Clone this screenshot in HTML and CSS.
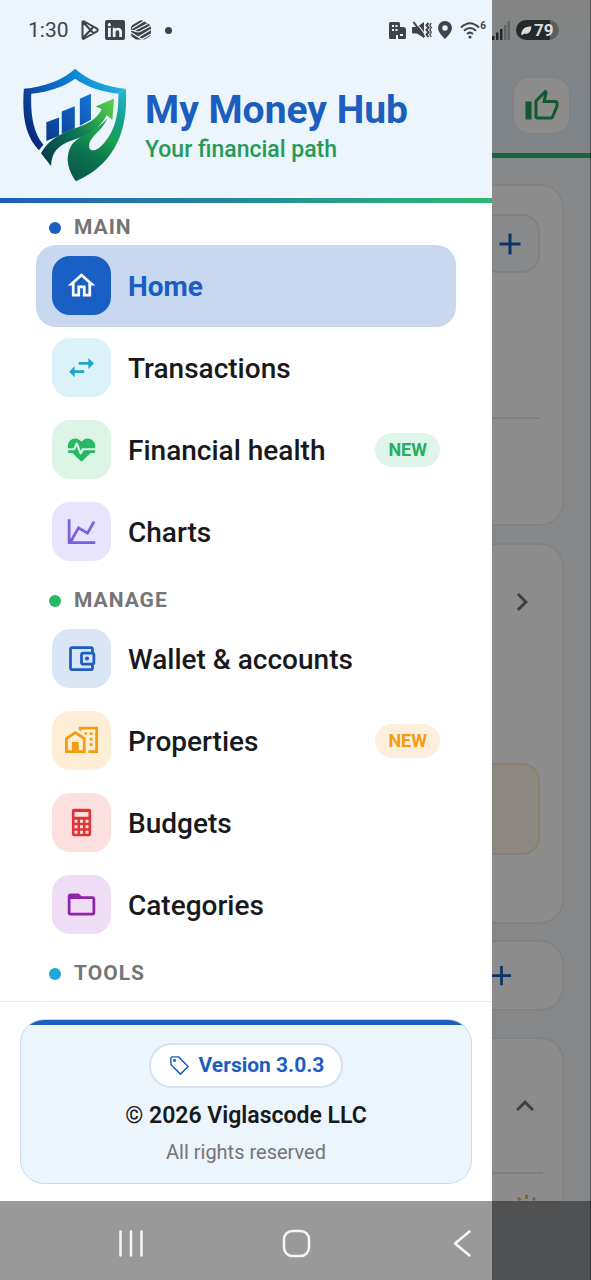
FILE: index.html
```html
<!DOCTYPE html>
<html lang="en">
<head>
<meta charset="utf-8">
<meta name="viewport" content="width=device-width, initial-scale=1">
<title>My Money Hub</title>
<link rel="stylesheet" href="styles.css">
</head>
<body>
<div class="app">

  <main class="page">
    <header class="page-header">
      <button class="like-button" type="button" aria-label="Rate the app">
        <svg class="icon-36" viewBox="0 0 24 24"><path d="M5,9V21H1V9H5M9,21A2,2 0 0,1 7,19V9C7,8.45 7.22,7.95 7.59,7.59L14.17,1L15.23,2.06C15.5,2.33 15.67,2.7 15.67,3.11L15.64,3.43L14.69,8H21C22.11,8 23,8.9 23,10V12C23,12.26 22.95,12.5 22.86,12.73L19.84,19.78C19.54,20.5 18.83,21 18,21H9M9,19H18.03L21,12V10H12.21L13.34,4.68L9,9.03V19Z"/></svg>
      </button>
    </header>
    <div class="page-body">
      <section class="card card-balance">
        <button class="add-button" type="button" aria-label="Add">
          <svg class="icon-36" viewBox="0 0 24 24"><path d="M19,13H13V19H11V13H5V11H11V5H13V11H19V13Z"/></svg>
        </button>
        <div class="divider"></div>
      </section>
      <section class="card card-summary">
        <svg class="icon-36 chevron" viewBox="0 0 24 24"><path d="M8.59,16.58L13.17,12L8.59,7.41L10,6L16,12L10,18L8.59,16.58Z"/></svg>
        <div class="notice"></div>
      </section>
      <button class="card card-add" type="button" aria-label="Add account">
        <svg class="icon-33" viewBox="0 0 24 24"><path d="M19,13H13V19H11V13H5V11H11V5H13V11H19V13Z"/></svg>
      </button>
      <section class="card card-tips">
        <div class="tips-head">
          <svg class="icon-36 chevron" viewBox="0 0 24 24"><path d="M7.41,15.41L12,10.83L16.59,15.41L18,14L12,8L6,14L7.41,15.41Z"/></svg>
        </div>
        <div class="tips-row">
          <svg class="icon-33 sun" viewBox="0 0 24 24"><circle cx="12" cy="12" r="4"/><path d="M12 2v3M12 19v3M2 12h3M19 12h3M6 4l1.200 2.200M18 4l-1.200 2.200M5 19l2-2M19 19l-2-2"/></svg>
        </div>
      </section>
    </div>
  </main>

  <div class="scrim"></div>

  <aside class="drawer">
    <header class="brand">
      <svg class="brand-logo" viewBox="20 26 312 340" aria-hidden="true">
        <defs>
          <linearGradient id="rim" gradientUnits="userSpaceOnUse" x1="30" y1="250" x2="320" y2="80">
            <stop offset="0" stop-color="#0b1f6e"/><stop offset=".35" stop-color="#0a55b0"/><stop offset=".65" stop-color="#0b84d6"/><stop offset="1" stop-color="#25b7d6"/>
          </linearGradient>
          <linearGradient id="hand" gradientUnits="userSpaceOnUse" x1="310" y1="90" x2="170" y2="350">
            <stop offset="0" stop-color="#22b3cf"/><stop offset=".28" stop-color="#14a08a"/><stop offset=".5" stop-color="#1ba04c"/><stop offset=".72" stop-color="#0b7350"/><stop offset="1" stop-color="#0a5a4a"/>
          </linearGradient>
          <linearGradient id="arrow" gradientUnits="userSpaceOnUse" x1="85" y1="300" x2="290" y2="130">
            <stop offset="0" stop-color="#083a4a"/><stop offset=".5" stop-color="#0b7a55"/><stop offset=".8" stop-color="#37b24a"/><stop offset="1" stop-color="#5ccb4a"/>
          </linearGradient>
          <linearGradient id="bars" gradientUnits="userSpaceOnUse" x1="92" y1="240" x2="225" y2="110">
            <stop offset="0" stop-color="#0b3a8e"/><stop offset="1" stop-color="#1273d2"/>
          </linearGradient>
        </defs>
        <path fill="url(#rim)" d="M178 28C138 64 84 82 25 88C19 165 28 228 70 271L83 255C52 217 45 165 47 103C96 98 143 83 178 58C212 83 260 97 307 103L329 88C272 82 217 64 178 28Z"/>
        <path fill="url(#hand)" d="M307 103L329 88C337 213 296 313 180 364C151 322 151 290 164 262C185 224 240 219 274 176C257 218 216 232 220 262C223 276 238 273 251 263C294 226 308 170 307 103Z"/>
        <path fill="url(#arrow)" d="M294 117L239 141L257 148C240 188 195 198 158 213C122 228 93 249 76 280L106 318C108 276 127 256 168 242C214 227 252 208 272 167L289 180Z"/>
        <path fill="url(#bars)" d="M92 188L130 174V228L92 244ZM138 156L177 140V206L138 222ZM192 118L225 103V180L192 198Z"/>
      </svg>
      <div class="brand-text">
        <h1 class="brand-name">My Money Hub</h1>
        <p class="brand-tagline">Your financial path</p>
      </div>
    </header>
    <div class="brand-rule"></div>

    <nav class="menu" aria-label="Main menu">
      <h2 class="section-label dot-blue">MAIN</h2>
      <a class="item item-active" href="#home">
        <span class="tile tile-home"><svg class="icon-33" viewBox="0 0 24 24"><path d="M12 5.690l5 4.500V18h-2v-6H9v6H7v-7.810l5-4.500M12 3L2 12h3v8h6v-6h2v6h6v-8h3L12 3z"/></svg></span>
        <span class="item-text">Home</span>
      </a>
      <a class="item" href="#transactions">
        <span class="tile tile-cyan"><svg class="icon-33" viewBox="0 0 24 24"><path d="M21,9L17,5V8H10V10H17V13M7,11L3,15L7,19V16H14V14H7V11Z"/></svg></span>
        <span class="item-text">Transactions</span>
      </a>
      <a class="item" href="#health">
        <span class="tile tile-green"><svg class="icon-33" viewBox="0 0 24 24"><path d="M7.5,4A5.5,5.5 0 0,0 2,9.5C2,10 2.09,10.5 2.22,11H6.3L7.57,7.63C7.87,6.83 9.05,6.75 9.43,7.63L11.5,13L12.09,11.58C12.22,11.25 12.57,11 13,11H21.78C21.91,10.5 22,10 22,9.5A5.5,5.5 0 0,0 16.5,4C14.64,4 13,4.93 12,6.34C11,4.93 9.36,4 7.5,4M3,12.5A1,1 0 0,0 2,13.5A1,1 0 0,0 3,14.5H5.44L11,20C12,20.9 12,20.9 13,20L18.56,14.5H21A1,1 0 0,0 22,13.5A1,1 0 0,0 21,12.5H13.4L12.47,14.8C12.07,15.81 10.92,15.67 10.55,14.83L8.5,9.5L7.54,11.83C7.39,12.21 7.05,12.5 6.6,12.5H3Z"/></svg></span>
        <span class="item-text">Financial health</span>
        <span class="badge badge-green">NEW</span>
      </a>
      <a class="item" href="#charts">
        <span class="tile tile-violet"><svg class="icon-33" viewBox="0 0 24 24"><path d="M16,11.78L20.24,4.45L21.97,5.45L16.74,14.5L10.23,10.75L5.46,19H22V21H2V3H4V17.54L9.5,8L16,11.78Z"/></svg></span>
        <span class="item-text">Charts</span>
      </a>

      <h2 class="section-label dot-green">MANAGE</h2>
      <a class="item" href="#wallet">
        <span class="tile tile-blue"><svg class="icon-33" viewBox="0 0 24 24"><path d="M21 7.280V5c0-1.100-.9-2-2-2H5c-1.110 0-2 .9-2 2v14c0 1.100.89 2 2 2h14c1.100 0 2-.9 2-2v-2.280c.59-.35 1-.98 1-1.720V9c0-.74-.41-1.370-1-1.720zM20 9v6h-7V9h7zM5 19V5h14v2h-6c-1.100 0-2 .9-2 2v6c0 1.100.9 2 2 2h6v2H5z"/><circle cx="16" cy="12" r="1.500"/></svg></span>
        <span class="item-text">Wallet &amp; accounts</span>
      </a>
      <a class="item" href="#properties">
        <span class="tile tile-orange"><svg class="icon-33" viewBox="0 0 24 24"><path d="M10 2V4.260L12 5.590V4H22V19H17V21H24V2H10M7.500 5L0 10V21H15V10L7.500 5M14 6V6.930L15.610 8H16V6H14M18 6V8H20V6H18M7.500 7.500L13 11V19H10V13H5V19H2V11L7.500 7.500M18 10V12H20V10H18M18 14V16H20V14H18Z"/></svg></span>
        <span class="item-text">Properties</span>
        <span class="badge badge-orange">NEW</span>
      </a>
      <a class="item" href="#budgets">
        <span class="tile tile-red"><svg class="icon-33" viewBox="0 0 24 24"><path fill-rule="evenodd" d="M6.500 2h11A1.500 1.500 0 0 1 19 3.500v17a1.500 1.500 0 0 1-1.500 1.500h-11A1.500 1.500 0 0 1 5 20.500v-17A1.500 1.500 0 0 1 6.500 2ZM6.900 4.300v3.600h10.200V4.300ZM6.900 10v2.200h2.200V10ZM10.900 10v2.200h2.200V10ZM14.900 10v2.200h2.200V10ZM6.900 14v2.200h2.200V14ZM10.900 14v2.200h2.200V14ZM14.900 14v2.200h2.200V14ZM6.900 18v2.200h2.200V18ZM10.900 18v2.200h2.200V18ZM14.900 18v2.200h2.200V18Z"/></svg></span>
        <span class="item-text">Budgets</span>
      </a>
      <a class="item" href="#categories">
        <span class="tile tile-purple"><svg class="icon-33" viewBox="0 0 24 24"><path d="M20,18H4V8H20M20,6H12L10,4H4C2.89,4 2,4.89 2,6V18A2,2 0 0,0 4,20H20A2,2 0 0,0 22,18V8C22,6.89 21.1,6 20,6Z"/></svg></span>
        <span class="item-text">Categories</span>
      </a>

      <h2 class="section-label dot-cyan">TOOLS</h2>
    </nav>

    <footer class="drawer-footer">
      <div class="about">
        <div class="about-bar"></div>
        <div class="about-body">
          <span class="version">
            <svg class="version-icon" viewBox="0 0 24 24"><path d="M3 4.500A1.500 1.500 0 0 1 4.500 3H11L21 13L13 21L3 11Z"/><circle cx="6.800" cy="6.800" r=".8"/></svg>
            Version 3.0.3
          </span>
          <p class="copyright">© 2026 Viglascode LLC</p>
          <p class="rights">All rights reserved</p>
        </div>
      </div>
    </footer>
  </aside>

  <div class="status-bar">
    <span class="clock">1:30</span>
    <svg class="st-play" viewBox="0 0 18 20"><path d="M1.500 2.500V17.500Q1.500 19.300 3.200 18.500L16 11.300Q17.500 10 16 8.700L3.200 1.500Q1.500.7 1.500 2.500ZM2 2L12.500 13.200M2 18L12.500 6.800"/></svg>
    <svg class="st-20" viewBox="0 0 20 20"><rect width="20" height="20" rx="2"/><path class="cut" d="M3 7.800h2.800V17H3ZM7.800 7.800h2.700V9c1.300-2.200 6.500-2 6.500 2.600V17h-2.800v-4.800c0-2.800-3.600-2.600-3.600 0V17H7.800Z"/><circle class="cut" cx="4.400" cy="4.700" r="1.600"/></svg>
    <svg class="st-20" viewBox="0 0 20 20"><path d="M0 7.500Q0 6 1.500 5L9 .5Q10.500 0 12 .8L18.500 4.500Q20 5.500 20 7V14Q20 15.500 18.500 16.500L13.500 19.500H5L1.500 17Q0 16 0 14Z"/><path class="cut-line" d="M1 8.500L13 1M3.500 10.500L17 3.500M0 10.500C4 10 5 13 9 11.500L20 5.500M7.500 17L20 9.500M10.500 19.500L20 14M0 12.500L8 17.500L12 20"/></svg>
    <span class="st-dot"></span>
    <span class="st-space"></span>
    <svg class="st-building" viewBox="0 0 17 17"><path fill-rule="evenodd" d="M1.500 0H9.500A1.500 1.500 0 0 1 11 1.500V5H14Q17 5 17 8V15.500A1.500 1.500 0 0 1 15.500 17H9V13H7V17H1.500A1.500 1.500 0 0 1 0 15.500V1.500A1.500 1.500 0 0 1 1.500 0ZM3 3v2h2V3ZM6.500 3v2h2V3ZM3 7v2h2V7ZM6.500 7v2h2V7ZM11 12v2h3v-2Z"/></svg>
    <svg class="st-20" viewBox="0 0 20 20"><path d="M1 7H5L12 2V18L5 13.500H1Q0 13.500 0 12.500V8Q0 7 1 7Z"/><path class="cut-line" d="M3 1L14 15.500"/><path class="line" d="M1.500 2L12.500 17M16.500 3l-2 2.300 2 2.300-2 2.300 2 2.300-2 2.300 2 2.500"/><path class="line-thin" d="M19.300 3l-1.500 2.300 1.500 2.300-1.500 2.300 1.500 2.300-1.500 2.300 1.500 2.500"/></svg>
    <svg class="st-pin" viewBox="0 0 14 18"><path fill-rule="evenodd" d="M7 0A7 7 0 0 1 14 7C14 11 9.500 15.500 7 18C4.500 15.500 0 11 0 7A7 7 0 0 1 7 0ZM7 4.300A2.700 2.700 0 1 0 7 9.700A2.700 2.700 0 1 0 7 4.300Z"/></svg>
    <span class="wifi">
      <svg class="st-wifi" viewBox="0 0 20 18"><path class="line" d="M1 6.500Q10-2 19 6.500M4 9.800Q10 4.200 16 9.800M7 13Q10 10.300 13 13"/><circle cx="10" cy="16" r="1.600"/></svg>
      <span class="wifi-gen">6</span>
    </span>
    <svg class="st-signal" viewBox="0 0 18 19"><path d="M0 15h2.500v4H0ZM4 11.500h2.500V19H4ZM8 8h2.500v11H8Z"/><path opacity=".35" d="M12 4H14.500v15H12ZM15.500 0H18v19h-2.500Z"/></svg>
    <span class="battery">
      <svg class="st-leaf" viewBox="0 0 12 10"><path d="M0 9.500C1 3 4 .5 11.500 .5C11 6.500 8 9.500 3 8.500L1.500 10Z"/></svg>79
    </span>
  </div>

  <div class="system-nav">
    <button class="sys-button" type="button" aria-label="Recent apps"><svg class="icon-33" viewBox="0 0 33 33"><path d="M5.500 4.500V28.500M16 4.500V28.500M26.500 4.500V28.500"/></svg></button>
    <button class="sys-button" type="button" aria-label="Home screen"><svg class="icon-33" viewBox="0 0 33 33"><rect x="4" y="4" width="25" height="25" rx="8.500"/></svg></button>
    <button class="sys-button" type="button" aria-label="Back"><svg class="icon-33" viewBox="0 0 33 33"><path d="M24.500 4.500L10 16.500L24.500 28.500"/></svg></button>
  </div>
</div>
</body>
</html>
```
FILE: styles.css
```css
* { box-sizing: border-box; }

body {
  margin: 0;
  font-family: Roboto, "Noto Sans", sans-serif;
  color: #17191c;
}

h1, h2, p { margin: 0; }
button { font: inherit; cursor: pointer; }
a { color: inherit; text-decoration: none; }
svg { display: block; flex: none; fill: currentColor; }

.icon-33 { width: 33px; height: 33px; }
.icon-36 { width: 36px; height: 36px; }

/* All layers share one column; the last row is the system navigation. */
.app {
  display: grid;
  grid-template-columns: minmax(0, 1fr);
  grid-template-rows: 60px minmax(0, 1fr) 79px;
  height: 100vh;
  overflow: hidden;
  background: #f3f6fa;
}

/* Page behind the drawer */
.page {
  grid-area: 1 / 1 / 3 / 2;
  overflow: hidden;
}
.page-header {
  display: flex;
  justify-content: flex-end;
  padding: 76px 20px 18px;
  background: linear-gradient(#f0f0f0 0, #e8f0f9 60%);
  border-bottom: 5px solid #2eb872;
}
.like-button {
  display: grid;
  place-items: center;
  width: 59px;
  height: 59px;
  padding: 0;
  color: #22a05a;
  background: #fff;
  border: 2px solid #e9ecef;
  border-radius: 18px;
}
.page-body {
  display: flex;
  flex-direction: column;
  padding: 26px 27px 0;
}
.card {
  display: flex;
  flex-direction: column;
  align-items: flex-end;
  flex: none;
  padding: 28px 22px;
  background: #fff;
  border: 2px solid #e9ecef;
  border-radius: 24px;
}
.card-balance { min-height: 342px; margin-bottom: 17px; }
.card-summary { min-height: 381px; margin-bottom: 16px; padding-top: 39px; }
.card-add {
  min-height: 71px;
  margin-bottom: 26px;
  padding: 0 44px;
  justify-content: center;
  color: #1b5ebf;
}
.card-tips { min-height: 342px; padding: 0 19px; }
.add-button {
  display: grid;
  place-items: center;
  width: 60px;
  height: 59px;
  padding: 0;
  color: #1b5ebf;
  background: #f7fafd;
  border: 2px solid #e4e7eb;
  border-radius: 18px;
}
.divider {
  width: 100%;
  margin-top: 144px;
  border-top: 2px solid #e9ebed;
}
.chevron { color: #757575; }
.notice {
  width: 100%;
  height: 92px;
  margin-top: 143px;
  background: #fff8ec;
  border: 2px solid #f8e8cb;
  border-radius: 18px;
}
.tips-head {
  display: flex;
  justify-content: flex-end;
  align-items: center;
  width: 100%;
  height: 135px;
  border-bottom: 2px solid #e4e6e8;
}
.tips-row { padding: 18px 0; }
.sun { fill: none; stroke: #e5b65b; stroke-width: 2; }

.scrim {
  grid-area: 1 / 1 / 4 / 2;
  background: rgba(0, 0, 0, 0.45);
  border-right: 1px solid rgba(0, 0, 0, 0.35);
}

/* Drawer */
.drawer {
  grid-area: 1 / 1 / 4 / 2;
  display: flex;
  flex-direction: column;
  width: min(492px, 84vw);
  min-height: 0;
  padding-bottom: 79px;
  background: #fff;
}
.brand {
  display: flex;
  align-items: center;
  gap: 18px;
  padding: 68px 22px 16px;
  background: #ecf4fc;
}
.brand-logo { width: 105px; height: 114px; }
.brand-text { padding-top: 4px; }
.brand-name {
  font-size: 39px;
  line-height: 46px;
  font-weight: 700;
  color: #1b5ebf;
  white-space: nowrap;
}
.brand-tagline {
  font-size: 23px;
  line-height: 34px;
  font-weight: 500;
  color: #239b56;
}
.brand-rule {
  flex: none;
  height: 5px;
  background: linear-gradient(90deg, #1b5ebf, #2eb872);
}

.menu {
  flex: 1;
  min-height: 0;
  overflow: hidden;
  padding: 0 36px;
}
.section-label {
  display: flex;
  align-items: center;
  gap: 13px;
  padding: 15px 13px 5px;
  font-size: 21px;
  line-height: 25px;
  font-weight: 700;
  letter-spacing: 1px;
  color: #757575;
}
.section-label:first-child { padding-top: 12px; }
.section-label::before {
  content: "";
  width: 12px;
  height: 12px;
  border-radius: 50%;
  background: currentColor;
}
.dot-blue::before { background: #1b5ebf; }
.dot-green::before { background: #27b765; }
.dot-cyan::before { background: #22a5d8; }

.item {
  display: flex;
  align-items: center;
  gap: 17px;
  height: 82px;
  padding: 0 16px 1px;
  border-radius: 20px;
  font-size: 28px;
  line-height: 36px;
  font-weight: 500;
}
.item-active {
  background: #c7d8f0;
  color: #1b5ebf;
  font-weight: 700;
}
.item-text { flex: 1; padding-top: 3px; white-space: nowrap; }
.tile {
  display: grid;
  place-items: center;
  flex: none;
  width: 59px;
  height: 59px;
  border-radius: 18px;
}
.tile-home { background: #1a5fc4; color: #fff; }
.tile-cyan { background: #dbf2f9; color: #22a5cc; }
.tile-green { background: #dcf5e7; color: #27b765; }
.tile-violet { background: #e8e4fd; color: #7a5fe0; }
.tile-blue { background: #dae6f6; color: #1b5ebf; }
.tile-orange { background: #feeed6; color: #f39c12; }
.tile-red { background: #fce0e0; color: #dc3535; }
.tile-purple { background: #eeddf5; color: #8e24aa; }

.badge {
  padding: 5px 13px;
  border-radius: 17px;
  font-size: 18px;
  line-height: 24px;
  font-weight: 700;
}
.badge-green { background: #dff5e9; color: #27ae60; }
.badge-orange { background: #feefdc; color: #f39c12; }

.drawer-footer {
  flex: none;
  padding: 17px 20px;
  border-top: 1px solid #e8ebee;
}
.about {
  overflow: hidden;
  background: #ecf4fc;
  border: 1px solid #c9daee;
  border-radius: 24px;
}
.about-bar { height: 5px; background: #1b5ebf; }
.about-body {
  display: flex;
  flex-direction: column;
  align-items: center;
  padding: 18px 20px;
}
.version {
  display: flex;
  align-items: center;
  gap: 8px;
  margin-bottom: 12px;
  padding: 8px 17px;
  background: #fff;
  border: 2px solid #d6e2f1;
  border-radius: 23px;
  font-size: 21px;
  line-height: 25px;
  font-weight: 700;
  color: #1b5ebf;
}
.version-icon {
  width: 23px;
  height: 23px;
  fill: none;
  stroke: currentColor;
  stroke-width: 1.5;
  stroke-linejoin: round;
}
.copyright { font-size: 23px; line-height: 32px; font-weight: 600; }
.rights { margin-top: 8px; font-size: 20px; line-height: 25px; color: #757575; }

/* System bars */
.status-bar {
  grid-area: 1 / 1 / 2 / 2;
  display: flex;
  align-items: center;
  gap: 6px;
  padding: 0 32px 0 28px;
  color: #404347;
}
.clock { margin-right: 6px; font-size: 21px; line-height: 24px; }
.cut { fill: #ecf4fc; }
.cut-line { fill: none; stroke: #ecf4fc; stroke-width: 1.2; }
.line { fill: none; stroke: currentColor; stroke-width: 2; }
.line-thin { fill: none; stroke: currentColor; stroke-width: 1.2; }
.st-play { width: 18px; height: 20px; fill: none; stroke: currentColor; stroke-width: 2; stroke-linejoin: round; }
.st-20 { width: 20px; height: 20px; }
.st-dot { width: 7px; height: 7px; margin-left: 8px; border-radius: 50%; background: currentColor; }
.st-space { flex: 1; }
.st-building { width: 17px; height: 17px; }
.st-pin { width: 14px; height: 18px; }
.wifi { display: flex; align-items: flex-start; margin-left: 2px; }
.st-wifi { width: 20px; height: 18px; }
.wifi-gen { font-size: 10px; line-height: 10px; font-weight: 700; }
.st-signal { width: 18px; height: 19px; color: #24262a; }
.battery {
  display: flex;
  align-items: center;
  gap: 2px;
  width: 43px;
  height: 20px;
  padding-left: 5px;
  border-radius: 10px;
  background: linear-gradient(90deg, #27282a 79%, #5c5d5f 79%);
  font-size: 17px;
  line-height: 20px;
  font-weight: 700;
  color: #dcdcdc;
}
.st-leaf { width: 11px; height: 9px; }

.system-nav {
  grid-area: 3 / 1 / 4 / 2;
  display: flex;
  align-items: center;
  justify-content: space-around;
  padding: 6px 47px 0 49px;
  background: rgba(0, 0, 0, 0.4);
}
.sys-button { padding: 0; border: 0; background: none; color: #f6f6f6; }
.sys-button svg { fill: none; stroke: currentColor; stroke-width: 2.5; stroke-linecap: round; stroke-linejoin: round; }
```
